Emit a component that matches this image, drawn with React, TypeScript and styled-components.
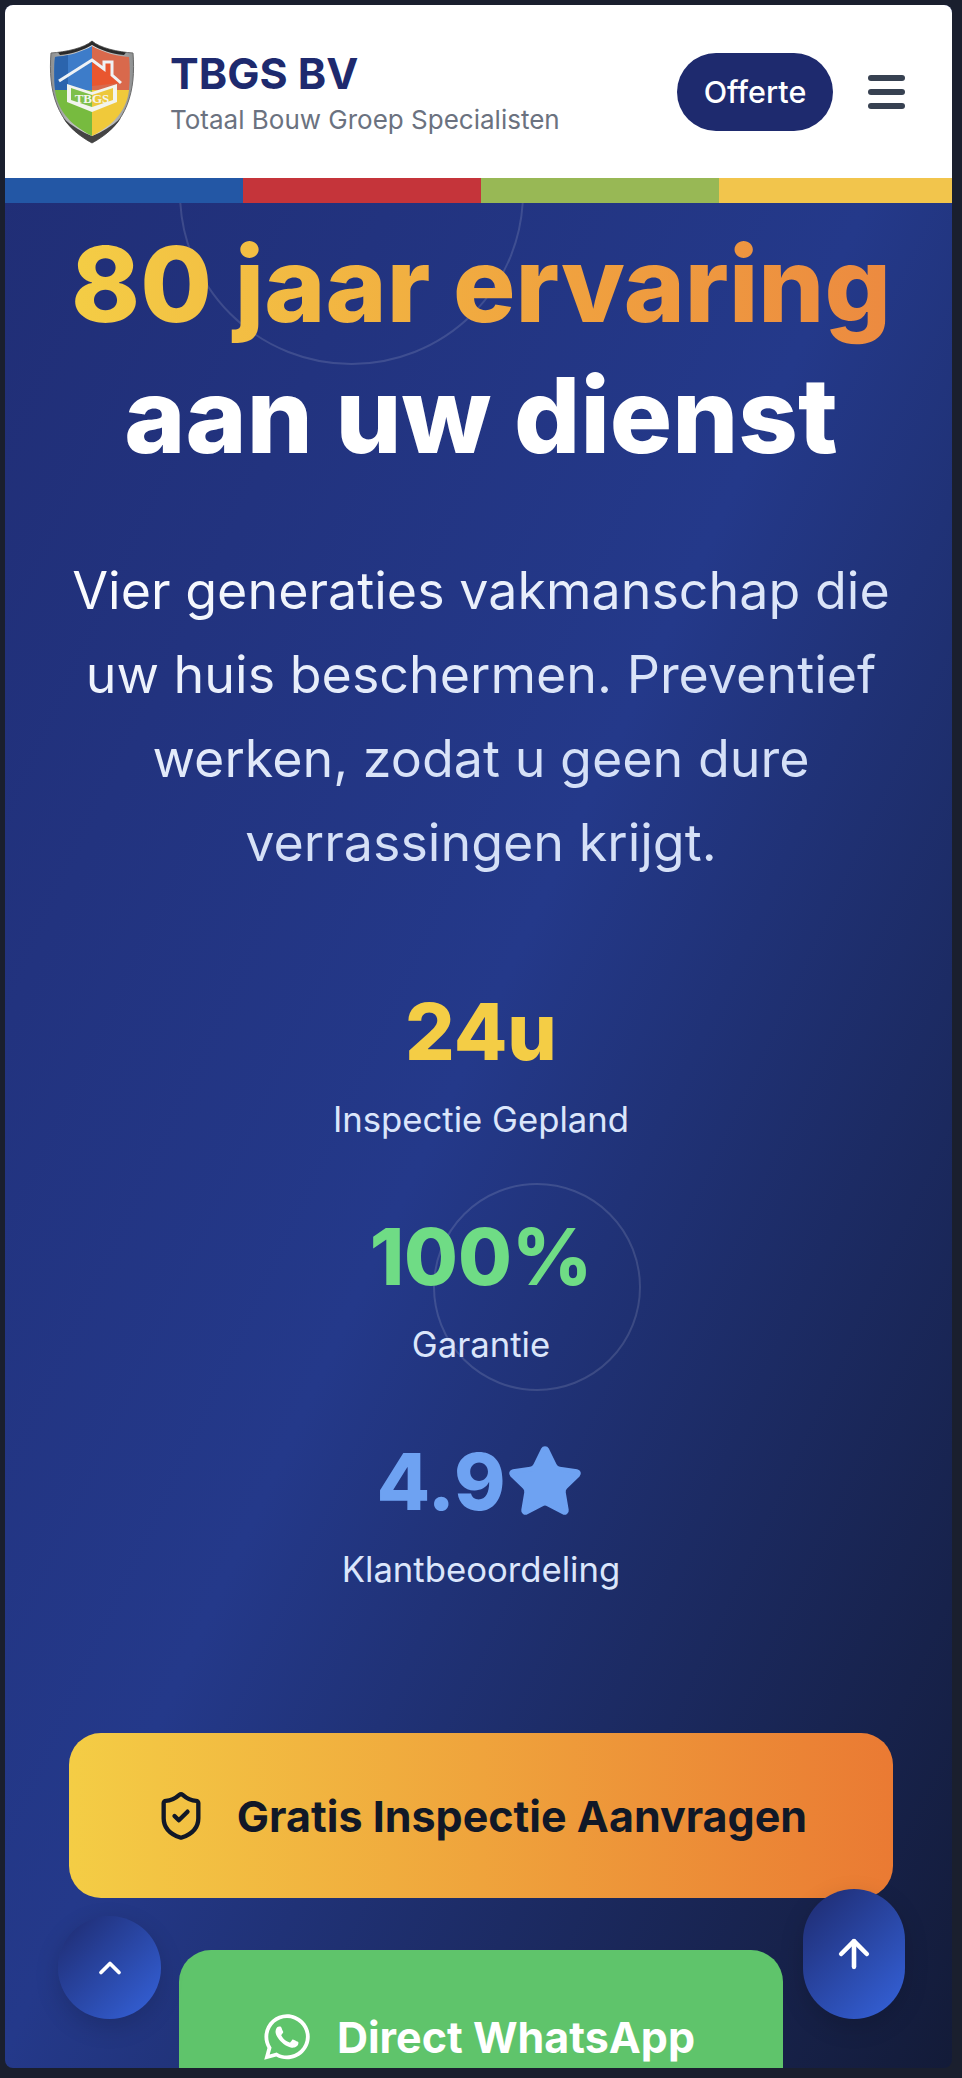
import React from "react";
import styled, { createGlobalStyle } from "styled-components";
import { ShieldCheck, ChevronUp, ArrowUp, Star } from "lucide-react";
import { FaWhatsapp } from "react-icons/fa";

const Global = createGlobalStyle`
  html, body { margin: 0; padding: 0; background: #1a1f2e; }
  * { box-sizing: border-box; }
  body { font-family: Inter, "Liberation Sans", sans-serif; }
`;

const Frame = styled.div`
  width: 962px; height: 2078px; padding: 5px 10px 10px 5px; background: #1a1f2e; overflow: hidden;
`;
const Screen = styled.div`
  position: relative; width: 947px; height: 2063px; border-radius: 8px; overflow: hidden;
  background: linear-gradient(115deg, #202d74 0%, #24398a 50%, #131b38 100%);
`;
const Page = styled.div`width: 952px; display: flex; flex-direction: column;`;
const Header = styled.header`
  height: 173px; flex: none; background: #fff; display: flex; align-items: center;
  padding: 0 52px 0 43px;
`;
const Logo = styled.svg`width: 88px; height: 104px; flex: none;`;
const Brand = styled.div`margin-left: 34px; flex: 1; display: flex; flex-direction: column; gap: 7px;`;
const BrandName = styled.div`font-size: 43px; line-height: 50px; font-weight: 700; color: #1e2a6e;`;
const BrandSub = styled.div`font-size: 26px; line-height: 30px; color: #6b7280;`;
const Cta = styled.button`
  width: 156px; height: 78px; border: 0; border-radius: 39px; background: #1e2a6e; color: #fff;
  font: 500 30.5px Inter, sans-serif;
`;
const Burger = styled.div`margin-left: 35px; width: 37px; display: flex; flex-direction: column; gap: 8px;`;
const BurgerBar = styled.span`display: block; height: 6px; border-radius: 3px; background: #374151;`;
const Stripe = styled.div`height: 25px; flex: none; display: grid; grid-template-columns: repeat(4, 1fr);`;
const StripePart = styled.span<{ $c: string }>`background: ${p => p.$c};`;
const Hero = styled.main`
  position: relative; height: 1865px; overflow: hidden; padding: 16px 64px 0;
  display: flex; flex-direction: column; align-items: center; text-align: center;
`;
const Ring = styled.div<{ $x: number; $y: number; $d: number }>`
  position: absolute; left: ${p => p.$x}px; top: ${p => p.$y}px; width: ${p => p.$d}px; height: ${p => p.$d}px;
  border: 2px solid rgba(255,255,255,.13); border-radius: 50%;
`;
const Title = styled.h1`
  margin: 0; font-size: 104px; line-height: 131px; font-weight: 800; position: relative; white-space: nowrap;
`;
const TitleAccent = styled.span`
  display: block; background: linear-gradient(90deg, #f4cd45 0%, #f0a23f 60%, #ec8a40 100%);
  -webkit-background-clip: text; background-clip: text; color: transparent;
`;
const TitleWhite = styled.span`display: block; color: #fff;`;
const Lead = styled.p`
  margin: 68px 0 0; font-size: 52px; line-height: 84px; position: relative; font-weight: 400;
  background: linear-gradient(160deg, #fff, #d5e0f7 60%);
  -webkit-background-clip: text; background-clip: text; color: transparent;
`;
const Stats = styled.div`margin-top: 99px; display: flex; flex-direction: column; align-items: center; gap: 68.5px; position: relative;`;
const Stat = styled.div`display: flex; flex-direction: column; align-items: center;`;
const StatValue = styled.div<{ $c: string }>`
  font-size: 78px; line-height: 96px; font-weight: 800; color: ${p => p.$c}; display: flex; align-items: center;
`;
const StatLabel = styled.div`margin-top: 16.5px; font-size: 34.7px; line-height: 44px; color: #dbe6fb;`;
const Primary = styled.button`
  margin-top: 142.5px; width: 824px; height: 165px; flex: none; border: 0; border-radius: 32px;
  background: linear-gradient(90deg, #f4cd45, #ea7a33);
  display: flex; align-items: center; justify-content: center; gap: 30px;
  font: 700 43px Inter, sans-serif; color: #111827;
`;
const Green = styled.button`
  margin-top: 52px; width: 604px; height: 165px; flex: none; border: 0; border-radius: 32px; background: #5fc46b;
  display: flex; align-items: center; justify-content: center; gap: 24px; padding: 8px 6px 0 0;
  font: 700 43px Inter, sans-serif; color: #fff;
`;
const Floating = styled.button<{ $l: number; $t: number; $w: number; $h: number }>`
  position: absolute; left: ${p => p.$l}px; top: ${p => p.$t}px; width: ${p => p.$w}px; height: ${p => p.$h}px;
  border: 0; border-radius: 52px; color: #fff; display: flex; align-items: center; justify-content: center;
  background: linear-gradient(135deg, #1e2a6e, #3563dc);
  box-shadow: 0 8px 24px rgba(0,0,0,.15);
`;

export default function App() {
  return (
    <>
      <Global />
      <Frame>
        <Screen>
          <Page>
            <Header>
              <Logo viewBox="0 0 88 104" aria-label="TBGS logo">
                <defs>
                  <linearGradient id="rim" x1="0" y1="0" x2="1" y2="0">
                    <stop offset="0" stopColor="#8d8f90" />
                    <stop offset=".5" stopColor="#e3e4e5" />
                    <stop offset="1" stopColor="#8d8f90" />
                  </linearGradient>
                </defs>
                <path d="M44 1 C36 8 18 12 3 13 C0 50 8 84 44 103 C80 84 88 50 85 13 C70 12 52 8 44 1Z" fill="url(#rim)" stroke="#6a6a6a" strokeWidth="1" />
                <path d="M44 1 C36 8 22 11 10 12.5 L12 15 C24 14 36 10 44 5 C52 10 64 14 76 15 L78 12.5 C66 11 52 8 44 1Z" fill="#2a2a2a" />
                <path d="M15 78 C22 89 33 97 44 103 C55 97 66 89 73 78 C64 86 54 92 44 96 C34 92 24 86 15 78Z" fill="#444" />
                <path d="M44 6 V50 H7 C6 38 6 26 7 17 C20 16 34 12 44 6Z" fill="#3d7cc9" />
                <path d="M20 15 C16 16 11 16.5 7 17 C6 26 6 38 7 50 H20Z" fill="#2b64ad" />
                <path d="M44 6 V50 H81 C82 38 82 26 81 17 C68 16 54 12 44 6Z" fill="#d9694c" />
                <path d="M44 50 V96 C20 84 9 68 7 50Z" fill="#77bb3f" />
                <path d="M44 50 V96 C68 84 79 68 81 50Z" fill="#f0c93a" />
                <path d="M44 22 L56 31 V23 L63 23 V36 L72 43 L44 46Z" fill="#e9562f" />
                <path d="M11 41 L44 20 L56 29 V22 L64 22 V35 L73 43" fill="none" stroke="#eef2f5" strokeWidth="3" />
                <path d="M19 44 L44 52 L69 44 V62 L44 72 L19 62Z" fill="#f2f4ee" />
                <path d="M23 48 L44 55 V67 L23 60Z" fill="#7fc04a" />
                <path d="M44 55 L65 48 V60 L44 67Z" fill="#edc83b" />
                <text x="44" y="63" textAnchor="middle" fontFamily="Liberation Serif, serif" fontSize="13" fontWeight="700" fill="#f4f6ef">TBGS</text>
              </Logo>
              <Brand>
                <BrandName>TBGS BV</BrandName>
                <BrandSub>Totaal Bouw Groep Specialisten</BrandSub>
              </Brand>
              <Cta>Offerte</Cta>
              <Burger><BurgerBar /><BurgerBar /><BurgerBar /></Burger>
            </Header>
            <Stripe>
              <StripePart $c="#2357a5" /><StripePart $c="#c5343a" /><StripePart $c="#98b855" /><StripePart $c="#f2c54c" />
            </Stripe>
            <Hero>
              <Ring $x={174} $y={-183} $d={345} />
              <Ring $x={428} $y={980} $d={208} />
              <Title>
                <TitleAccent>80 jaar ervaring</TitleAccent>
                <TitleWhite>aan uw dienst</TitleWhite>
              </Title>
              <Lead>Vier generaties vakmanschap die uw huis beschermen. Preventief werken, zodat u geen dure verrassingen krijgt.</Lead>
              <Stats>
                <Stat><StatValue $c="#f4cd45">24u</StatValue><StatLabel>Inspectie Gepland</StatLabel></Stat>
                <Stat><StatValue $c="#6fdc85">100%</StatValue><StatLabel>Garantie</StatLabel></Stat>
                <Stat><StatValue $c="#6ea2f2">4.9<Star size={80} fill="currentColor" strokeWidth={1.5} /></StatValue><StatLabel>Klantbeoordeling</StatLabel></Stat>
              </Stats>
              <Primary><ShieldCheck size={52} strokeWidth={2} />Gratis Inspectie Aanvragen</Primary>
              <Green><FaWhatsapp size={52} />Direct WhatsApp</Green>
            </Hero>
          </Page>
          <Floating $l={53} $t={1911} $w={103} $h={103}><ChevronUp size={36} strokeWidth={2.5} /></Floating>
          <Floating $l={798} $t={1884} $w={102} $h={130}><ArrowUp size={44} strokeWidth={2.5} /></Floating>
        </Screen>
      </Frame>
    </>
  );
}
